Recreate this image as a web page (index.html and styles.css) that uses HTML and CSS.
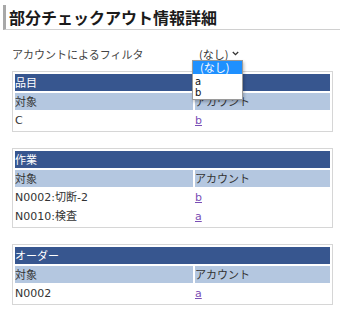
FILE: index.html
```html
<!DOCTYPE html>
<html lang="ja">
<head>
<meta charset="utf-8">
<title>部分チェックアウト情報詳細</title>
<link rel="stylesheet" href="styles.css">
</head>
<body>
<div class="page">
  <h1 class="title">部分チェックアウト情報詳細</h1>
  <div class="content">
    <div class="filter">
      <span class="filter-label">アカウントによるフィルタ</span>
      <div class="select-wrap">
        <div class="select"><span>(なし)</span><svg class="chev" width="7" height="5" viewBox="0 0 7 5"><path d="M0.8 1 L3.5 3.7 L6.2 1" fill="none" stroke="#333" stroke-width="1.3"/></svg></div>
        <ul class="dropdown">
          <li class="opt selected">(なし)</li>
          <li class="opt">a</li>
          <li class="opt">b</li>
        </ul>
      </div>
    </div>

    <table class="grid">
      <tr><th class="head" colspan="2">品目</th></tr>
      <tr><td class="sub c1">対象</td><td class="sub">アカウント</td></tr>
      <tr><td>C</td><td><a href="#b">b</a></td></tr>
    </table>

    <table class="grid">
      <tr><th class="head" colspan="2">作業</th></tr>
      <tr><td class="sub c1">対象</td><td class="sub">アカウント</td></tr>
      <tr><td>N0002:切断-2</td><td><a href="#b">b</a></td></tr>
      <tr><td>N0010:検査</td><td><a href="#a">a</a></td></tr>
    </table>

    <table class="grid">
      <tr><th class="head" colspan="2">オーダー</th></tr>
      <tr><td class="sub c1">対象</td><td class="sub">アカウント</td></tr>
      <tr><td>N0002</td><td><a href="#a">a</a></td></tr>
    </table>
  </div>
</div>
</body>
</html>
```
FILE: styles.css
```css
html, body {
  margin: 0;
  padding: 0;
  background: #fff;
}
body {
  font-family: "DejaVu Sans", "Noto Sans CJK JP", sans-serif;
  font-size: 11px;
  color: #333;
}
.page {
  padding-top: 5px;
}
.title {
  margin: 0 0 0 3px;
  padding-left: 3px;
  border-left: 3px solid #a8a8a8;
  border-bottom: 1px solid #d0d0d0;
  font-family: "Noto Sans CJK JP", sans-serif;
  font-size: 16px;
  font-weight: bold;
  line-height: 24px;
  color: #1a1a1a;
}
.content {
  padding: 0 7px 0 12px;
}
.filter {
  margin-top: 16px;
  display: grid;
  grid-template-columns: 180px 1fr;
  align-items: center;
  height: 13px;
}
.filter-label {
  font-family: "Noto Sans CJK JP", sans-serif;
  color: #444;
  line-height: 13px;
  padding-top: 2px;
}
.select-wrap {
  position: relative;
  height: 13px;
}
.select {
  display: flex;
  align-items: center;
  width: 54px;
  height: 13px;
  padding-left: 7px;
  box-sizing: border-box;
  font-family: "Noto Sans CJK JP", sans-serif;
  line-height: 12px;
  color: #333;
}
.chev {
  margin-left: 4px;
}
.dropdown {
  position: absolute;
  top: 13px;
  left: 0;
  width: 51px;
  margin: 0;
  padding: 0 0 1px;
  list-style: none;
  background: #fff;
  border: 1px solid #9a9a9a;
  box-shadow: 1px 2px 3px rgba(0,0,0,0.25);
  box-sizing: border-box;
  z-index: 2;
}
.opt {
  font-family: "DejaVu Sans", "Noto Sans CJK JP", sans-serif;
  font-size: 10px;
  line-height: 11px;
  padding-left: 2px;
  color: #111;
}
.opt.selected {
  background: #1e90ff;
  color: #fff;
  font-family: "Noto Sans CJK JP", sans-serif;
  font-size: 11px;
  line-height: 13px;
  padding-left: 7px;
  margin-bottom: 2px;
}
.grid {
  width: 100%;
  border: 1px solid #d6d6d6;
  border-spacing: 2px;
  margin-top: 12px;
  margin-bottom: 16px;
}
.grid + .grid {
  margin-top: 0;
}
.grid th, .grid td {
  height: 17px;
  padding: 0;
  text-align: left;
  font-weight: normal;
  line-height: 17px;
  white-space: nowrap;
}
.head {
  background: #37568f;
  color: #fff;
  font-family: "Noto Sans CJK JP", sans-serif;
}
.sub {
  background: #b4c7e0;
  color: #333;
  font-family: "Noto Sans CJK JP", sans-serif;
}
.c1 {
  width: 178px;
}
.grid a {
  color: #7a4fb5;
  text-decoration: underline;
}
```
